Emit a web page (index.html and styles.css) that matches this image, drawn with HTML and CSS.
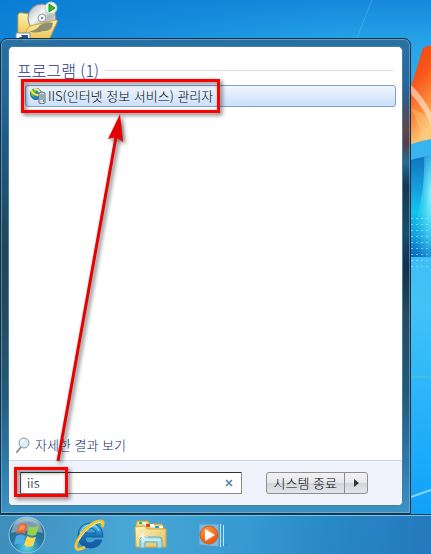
FILE: index.html
```html
<!DOCTYPE html>
<html lang="ko">
<head>
  <meta charset="UTF-8">
  <meta name="viewport" content="width=device-width, initial-scale=1">
  <title>시작 메뉴</title>
  <link rel="stylesheet" href="styles.css">
</head>
<body>
  <!-- 바탕 화면 -->
  <svg class="wallpaper" viewBox="0 0 431 554" preserveAspectRatio="xMaxYMin slice" aria-hidden="true">
    <defs>
      <linearGradient id="sky" x1="0" y1="0" x2="0" y2="1">
        <stop offset="0" stop-color="#1689dc"/>
        <stop offset="0.08" stop-color="#27a5e7"/>
        <stop offset="0.2" stop-color="#35b0ec"/>
        <stop offset="0.55" stop-color="#42c3f8"/>
        <stop offset="0.85" stop-color="#18a9fa"/>
        <stop offset="1" stop-color="#1098f0"/>
      </linearGradient>
      <linearGradient id="skyLeft" x1="0" y1="0" x2="1" y2="0">
        <stop offset="0" stop-color="#0878d2" stop-opacity="0.75"/>
        <stop offset="0.8" stop-color="#0878d2" stop-opacity="0"/>
      </linearGradient>
      <linearGradient id="orange" x1="0" y1="0" x2="0.3" y2="1">
        <stop offset="0" stop-color="#e8400f"/>
        <stop offset="0.45" stop-color="#f9571b"/>
        <stop offset="0.75" stop-color="#f98a3a"/>
        <stop offset="1" stop-color="#fbc070"/>
      </linearGradient>
      <linearGradient id="pane" x1="0" y1="0" x2="0" y2="1">
        <stop offset="0" stop-color="#1272bf"/>
        <stop offset="0.25" stop-color="#1495d8"/>
        <stop offset="0.55" stop-color="#10c3ee"/>
        <stop offset="0.8" stop-color="#159cdf"/>
        <stop offset="1" stop-color="#0866c2"/>
      </linearGradient>
      <radialGradient id="glow" cx="1" cy="0.4" r="0.9">
        <stop offset="0" stop-color="#8df3fb"/>
        <stop offset="1" stop-color="#23c7ee" stop-opacity="0"/>
      </radialGradient>
      <pattern id="dots" width="5" height="6" patternUnits="userSpaceOnUse">
        <rect x="1" y="2" width="2" height="1" fill="#9be9fb"/>
      </pattern>
    </defs>
    <rect width="431" height="554" fill="url(#sky)"/>
    <rect width="431" height="60" fill="url(#skyLeft)"/>
    <path d="M372 0L357 38" stroke="#6cc9f2" stroke-opacity="0.35"/>
    <path d="M423 48L431 45V139Q420 141 405 146V106Z" fill="url(#orange)"/>
    <path d="M411 85Q424 97 431 113V125Q424 108 411 94Z" fill="#fff" fill-opacity="0.5"/>
    <path d="M411 108Q419 123 422 141L431 139V118Z" fill="#ffd68c" fill-opacity="0.35"/>
    <path d="M405 162Q418 157 431 156V257H405Z" fill="url(#pane)"/>
    <path d="M424 157Q426 195 411 235V257H431V156Z" fill="url(#glow)"/>
    <rect x="411" y="216" width="20" height="54" fill="url(#dots)" fill-opacity="0.7"/>
    <path d="M411 377Q420 376 431 378" stroke="#48bfdb" stroke-width="2" fill="none"/>
    <path d="M411 497L431 490" stroke="#82d5fc" stroke-width="2"/>
  </svg>

  <!-- 바로 가기 아이콘 -->
  <svg class="shortcut" viewBox="0 0 46 46" width="46" height="46" role="img" aria-label="바로 가기">
    <defs>
      <linearGradient id="gold" x1="0" y1="0" x2="0" y2="1">
        <stop offset="0" stop-color="#fff3b4"/>
        <stop offset="1" stop-color="#e9b941"/>
      </linearGradient>
      <linearGradient id="disc" x1="0" y1="0" x2="1" y2="1">
        <stop offset="0" stop-color="#a5adb2"/>
        <stop offset="0.4" stop-color="#f4f6f7"/>
        <stop offset="0.6" stop-color="#b5bcc0"/>
        <stop offset="1" stop-color="#e1e4e5"/>
      </linearGradient>
    </defs>
    <path d="M3 15Q4 12 7 13L14 14L15 38L3 41Z" fill="url(#gold)" stroke="#d9a52b"/>
    <circle cx="27" cy="18" r="14" fill="url(#disc)" stroke="#82898d"/>
    <circle cx="27" cy="18" r="4" fill="#eef0f0" stroke="#9ba2a5"/>
    <circle cx="27" cy="18" r="1" fill="#1c88cc"/>
    <path d="M15 26L41 20Q43 20 42 22L33 42L5 43L13 28Z" fill="url(#gold)" stroke="#d9a52b"/>
    <path d="M14 31Q21 31 25 25Q33 21 38 23Q37 32 28 31Q20 34 14 31Z" fill="#777968" fill-opacity="0.8"/>
    <circle cx="36" cy="8" r="6" fill="#eef8ed" stroke="#b5d8b4"/>
    <path d="M34 4L40 8L34 12Z" fill="#40b63a" stroke="#258a24"/>
    <path d="M1 33H15V43H1Z" fill="#fff" stroke="#718ba0"/>
    <path d="M3 43Q2 36 7 37L6 35H13V41L11 39Q7 39 8 43Z" fill="#24558e"/>
  </svg>

  <main class="desktop">
    <section class="start-menu">
      <div class="menu-panel">
        <div class="results">
          <h2 class="group-title">프로그램 (1)</h2>
          <a class="result-item" href="#">
            <svg viewBox="0 0 16 16" width="16" height="16" aria-hidden="true">
              <circle cx="6" cy="6" r="5.5" fill="#2385bd" stroke="#25668a"/>
              <path d="M1 4Q3 0 7 1L6 4L3 5L4 8L3 9Q0 7 1 4Z" fill="#59b94a"/>
              <path d="M1 2Q4 8 10 7" stroke="#ffdd38" stroke-width="2" fill="none"/>
              <path d="M4 1Q9 1 10 5" stroke="#fff17f" stroke-width="2" fill="none"/>
              <path d="M9 5L12 4L15 5V15L12 16L9 15Z" fill="#d5dce0" stroke="#5d7382"/>
              <path d="M10 7H14M10 9H14M10 11H14" stroke="#58778b"/>
              <path d="M13 13H14" stroke="#31b33a" stroke-width="2"/>
            </svg>
            <span>IIS(인터넷 정보 서비스) 관리자</span>
          </a>
        </div>
        <a class="more-results" href="#">
          <svg viewBox="0 0 16 16" width="16" height="16" aria-hidden="true">
            <path d="M6 10L2 15" stroke="#8d8d8d" stroke-width="2" stroke-linecap="round"/>
            <circle cx="9" cy="6" r="5" fill="#d7effb" stroke="#8698a5"/>
            <path d="M6 6Q6 3 9 3" stroke="#fff" stroke-width="2" fill="none"/>
          </svg>
          <span>자세한 결과 보기</span>
        </a>
        <form class="menu-footer">
          <div class="search-box">
            <input type="text" id="search" value="iis" aria-label="프로그램 및 파일 검색">
            <button type="reset" class="clear-btn" aria-label="지우기">
              <svg viewBox="0 0 8 8" width="8" height="8" aria-hidden="true">
                <path d="M1 1L7 7M7 1L1 7" stroke="#4d7ea8" stroke-width="1.5"/>
              </svg>
            </button>
          </div>
          <div class="power">
            <button type="button" class="shutdown-btn">시스템 종료</button>
            <button type="button" class="power-more" aria-label="종료 옵션">
              <svg viewBox="0 0 5 8" width="5" height="8" aria-hidden="true">
                <path d="M0 0L5 4L0 8Z" fill="#333"/>
              </svg>
            </button>
          </div>
        </form>
      </div>
    </section>
  </main>

  <!-- 작업 표시줄 -->
  <nav class="taskbar">
    <button type="button" aria-label="시작">
      <svg viewBox="0 0 38 38" width="38" height="38" aria-hidden="true">
        <defs>
          <radialGradient id="orb" cx="0.5" cy="0.85" r="0.85">
            <stop offset="0" stop-color="#59d6ec"/>
            <stop offset="0.45" stop-color="#247ba6"/>
            <stop offset="0.8" stop-color="#316682"/>
            <stop offset="1" stop-color="#b5d4de"/>
          </radialGradient>
        </defs>
        <circle cx="19" cy="19" r="18" fill="url(#orb)" stroke="#8cc5df"/>
        <path d="M3 17Q5 3 19 3Q33 3 35 17Q19 12 3 17Z" fill="#fff" fill-opacity="0.35"/>
        <path d="M11 9Q15 6 19 9L17 18Q13 15 8 18Z" fill="#ed6330"/>
        <path d="M21 10Q25 13 31 9L28 19Q23 21 19 18Z" fill="#9bd04b"/>
        <path d="M8 20Q13 17 17 20L15 29Q10 26 6 29Z" fill="#51a9e8"/>
        <path d="M19 20Q23 23 28 21L25 30Q20 32 16 29Z" fill="#ffd64c"/>
        <path d="M12 10Q15 8 17 10L16 14Q13 13 10 15Z" fill="#ffa46e" fill-opacity="0.7"/>
      </svg>
    </button>
    <button type="button" aria-label="Internet Explorer">
      <svg viewBox="2 0 32 32" width="32" height="32" aria-hidden="true">
        <defs>
          <linearGradient id="ie" x1="0" y1="0" x2="0" y2="1">
            <stop offset="0" stop-color="#5ac6f2"/>
            <stop offset="0.5" stop-color="#1575c2"/>
            <stop offset="1" stop-color="#155499"/>
          </linearGradient>
        </defs>
        <path d="M31 18H13Q13 24 18 24Q22 24 23 21H30Q27 29 18 29Q6 28 6 17Q6 5 18 4Q31 5 31 18ZM13 14H24Q23 9 18 9Q14 9 13 14Z" fill="url(#ie)" fill-rule="evenodd" stroke="#176196"/>
        <path d="M8 15Q10 7 18 6Q25 6 27 12" fill="none" stroke="#9fe4ff"/>
        <path d="M30 8Q33 2 28 2Q20 3 11 13Q1 27 5 30Q8 31 13 28" fill="none" stroke="#f5c733" stroke-width="3"/>
        <path d="M30 5Q29 2 23 5Q12 12 6 22" fill="none" stroke="#fff09a"/>
      </svg>
    </button>
    <button type="button" aria-label="Windows 탐색기">
      <svg viewBox="0 0 34 32" width="34" height="32" aria-hidden="true">
        <defs>
          <linearGradient id="folder" x1="0" y1="0" x2="1" y2="1">
            <stop offset="0" stop-color="#fff6c2"/>
            <stop offset="1" stop-color="#e3bd54"/>
          </linearGradient>
        </defs>
        <path d="M2 5L3 2H14L16 5H28L30 9V28H2Z" fill="#eed577" stroke="#bf9c47"/>
        <path d="M4 3H12V5H4Z" fill="#fff"/>
        <path d="M5 3H8V5H5Z" fill="#10c33b"/>
        <path d="M11 5H20V8H11Z" fill="#fff"/>
        <path d="M12 5H16V8H12Z" fill="#d94928"/>
        <path d="M20 7H29V9H20Z" fill="#fff"/>
        <path d="M21 7H25V9H21Z" fill="#269bdf"/>
        <path d="M1 8L11 7L13 10H32V28H2Z" fill="url(#folder)" stroke="#cba94f"/>
        <path d="M6 29V21Q6 18 9 18H25Q28 18 28 21V29H23V23H11V29Z" fill="#a3dff0" fill-opacity="0.9" stroke="#5dacc6"/>
        <path d="M8 21H26" stroke="#e2fbff"/>
        <path d="M9 13V24M4 18H14M6 15L12 21M12 15L6 21" stroke="#fff" stroke-opacity="0.7"/>
      </svg>
    </button>
    <button type="button" aria-label="Windows Media Player">
      <svg viewBox="-2 0 32 30" width="32" height="30" aria-hidden="true">
        <defs>
          <radialGradient id="player" cx="0.4" cy="0.3" r="0.8">
            <stop offset="0" stop-color="#ff9b45"/>
            <stop offset="1" stop-color="#e84a09"/>
          </radialGradient>
        </defs>
        <path d="M1 4H21V27L1 25Z" fill="#78b9de" stroke="#4d9dca"/>
        <path d="M22.5 4V27M25.5 5V26" stroke="#b9e2f5"/>
        <path d="M26 25H30" stroke="#357ca6"/>
        <circle cx="11" cy="15" r="9" fill="url(#player)" stroke="#d95b20"/>
        <path d="M7 9L17 15L7 21Z" fill="#fff"/>
      </svg>
    </button>
  </nav>

  <!-- 강조 표시 -->
  <svg class="marks" width="240" height="554" viewBox="0 0 240 554" aria-hidden="true">
    <g fill="none" stroke="#fe0000" stroke-width="3">
      <rect x="22.5" y="80.5" width="196" height="31"/>
      <rect x="15.5" y="468.5" width="51" height="27"/>
    </g>
    <path d="M58 461L116 137" stroke="#e80000" stroke-width="3"/>
    <path d="M120 114L123 142L116 137L108 139Z" fill="#e80000"/>
  </svg>
</body>
</html>
```

FILE: styles.css
```css
* {
  box-sizing: border-box;
}
body {
  margin: 0;
  min-height: 100vh;
  display: flex;
  flex-direction: column;
  position: relative;
  overflow: hidden;
  background: #27a5e7;
  font-family: "Noto Sans CJK KR", sans-serif;
  font-size: 13px;
  font-weight: 300;
  line-height: 20px;
  color: #000;
}
a {
  color: inherit;
  text-decoration: none;
}
button {
  font: inherit;
  padding: 0;
  border: none;
  background: none;
  cursor: pointer;
}
svg {
  display: block;
  flex: none;
}
.wallpaper {
  position: absolute;
  top: 0;
  left: 0;
  width: 100%;
  height: 100%;
}
.shortcut {
  position: absolute;
  top: 0;
  left: 15px;
}

/* 시작 메뉴 */
.desktop {
  flex: 1;
  display: flex;
  padding: 38px 20px 0 0;
  position: relative;
}
.start-menu {
  flex: 1;
  display: flex;
  padding: 7px;
  border: 1px solid #142f43;
  border-radius: 7px 7px 0 0;
  box-shadow: inset 0 0 0 1px rgba(150, 200, 225, 0.5);
  background:
    linear-gradient(transparent 10%, #654448 19%, #573d46 22%, #246a92 26%, #143652 31%, #174f6c 41%, #142f4a 48%, transparent 58%) right / 8px 100% no-repeat,
    linear-gradient(rgba(40, 110, 160, 0.92), #23659a 12%, #1f5a83 22%, #1e4659 45%, #244a5e 58%, #235a7a 75%, #2e7eb0 91%, #3b93c6);
}
.menu-panel {
  flex: 1;
  display: flex;
  flex-direction: column;
  border: 1px solid #477f9c;
  border-radius: 5px;
  background: #fff;
  overflow: hidden;
}
.results {
  flex: 1;
  padding: 12px 6px 0 8px;
}
.group-title {
  display: flex;
  align-items: center;
  gap: 6px;
  margin: 0 3px 4px 0;
  font-size: 16px;
  font-weight: 300;
  line-height: 22px;
  color: #1e3287;
}
.group-title::after {
  content: "";
  flex: 1;
  height: 1px;
  background: #dedede;
}
.result-item {
  display: flex;
  align-items: center;
  gap: 2px;
  height: 22px;
  margin-left: 8px;
  padding-left: 4px;
  border: 1px solid #7da2ce;
  border-radius: 3px;
  background: linear-gradient(#eff6fe, #cbe0fb);
}
.more-results {
  display: flex;
  align-items: center;
  gap: 4px;
  padding: 0 6px 5px;
  color: #0b1f6c;
}
.menu-footer {
  display: flex;
  align-items: center;
  gap: 24px;
  height: 45px;
  padding: 0 34px 0 11px;
  border-top: 1px solid #c8d8ea;
  background: #f0f3fb;
}
.search-box {
  flex: 1;
  display: flex;
  align-items: center;
  height: 22px;
  padding-right: 8px;
  border: 1px solid #8c8c8c;
  border-top-color: #333;
  border-left-color: #555;
  border-radius: 1px;
  background: #fff;
}
.search-box input {
  flex: 1;
  min-width: 0;
  height: 20px;
  padding: 0 6px;
  border: none;
  outline: none;
  background: none;
  font: inherit;
}
.power {
  display: flex;
  height: 22px;
  border: 1px solid #8e8f94;
  border-radius: 3px;
  background: linear-gradient(#f3f3f5, #e6e7ea 50%, #d2d4d9 50%, #e4e5e9);
}
.shutdown-btn {
  padding: 0 7px;
  border-right: 1px solid #8e8f94;
}
.power-more {
  display: flex;
  align-items: center;
  justify-content: center;
  width: 22px;
}

/* 작업 표시줄 */
.taskbar {
  position: relative;
  display: flex;
  align-items: center;
  gap: 28px;
  height: 40px;
  padding-left: 8px;
  border-top: 1px solid #17405c;
  box-shadow: inset 0 1px #79bddf;
  background: linear-gradient(100deg, #3e8dba, #49a7d6 30%, #389bd1 55%, #2989c6 75%, #2478bd);
}

/* 강조 표시 */
.marks {
  position: absolute;
  top: 0;
  left: 0;
  pointer-events: none;
  filter: drop-shadow(2px 2px 2px rgba(0, 0, 0, 0.6));
}
```
